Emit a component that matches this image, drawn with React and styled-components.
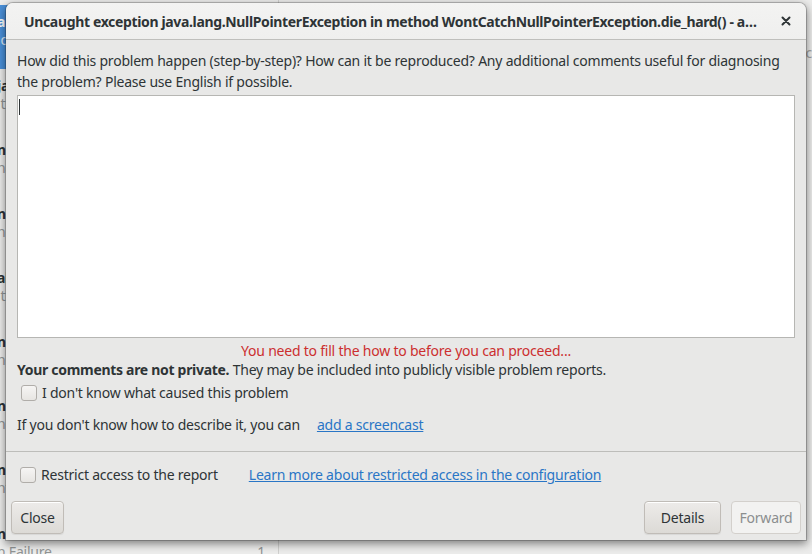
import React from "react";
import styled, { createGlobalStyle } from "styled-components";

const Global = createGlobalStyle`
  html, body { margin: 0; padding: 0; }
  body {
    width: 812px; height: 554px; overflow: hidden;
    background: #ececeb;
    font-family: "Noto Sans", "Open Sans", sans-serif;
    font-size: 14px;
    letter-spacing: -0.22px;
    color: #2e3436;
  }
`;

const Desktop = styled.div`
  position: relative;
  width: 812px;
  height: 554px;
  overflow: hidden;
  display: flex;
  align-items: flex-start;
`;

const Sidebar = styled.div`
  width: 279px;
  height: 554px;
  box-sizing: border-box;
  flex: none;
  border-right: 1px solid #d0d0ce;
  padding-top: 5px;
  display: flex;
  flex-direction: column;
  background: #ededec;
`;

const Row = styled.div`
  flex: none;
  height: 64px;
  box-sizing: border-box;
  padding: 8px 13px 0 0;
  margin-left: -3px;
  background: ${(p) => (p.$selected ? "#4a90d9" : "transparent")};
  color: ${(p) => (p.$selected ? "#ffffff" : "#2e3436")};
  display: flex;
  flex-direction: column;
  line-height: 18px;
`;

const RowTitle = styled.div`
  font-weight: bold;
  white-space: nowrap;
`;

const RowSub = styled.div`
  display: flex;
  justify-content: space-between;
  color: ${(p) => (p.$selected ? "#dbe8f7" : "#929595")};
  white-space: nowrap;
`;

const MainArea = styled.div`
  flex: 1;
  height: 554px;
  box-sizing: border-box;
  background: #ececeb;
  display: flex;
  justify-content: flex-end;
  padding-top: 43px;
  line-height: 20px;
  color: #a0a2a2;
`;

const Dialog = styled.div`
  position: absolute;
  left: 6px;
  top: 3px;
  width: 800px;
  height: 537px;
  background: #e8e8e7;
  border-radius: 7px 7px 0 0;
  box-shadow: 0 3px 9px 1px rgba(0, 0, 0, 0.45), 0 0 0 1px rgba(0, 0, 0, 0.2);
  display: flex;
  flex-direction: column;
  overflow: hidden;
`;

const HeaderBar = styled.div`
  height: 37px;
  flex: none;
  box-sizing: border-box;
  border-bottom: 1px solid #bfbfbc;
  background: linear-gradient(#f3f3f2, #efefee);
  display: flex;
  align-items: center;
  padding: 0 15px 0 18px;
  gap: 24px;
`;

const Title = styled.div`
  flex: 1;
  font-weight: bold;
  letter-spacing: -0.35px;
  white-space: nowrap;
  overflow: hidden;
  text-overflow: ellipsis;
  min-width: 0;
`;

const CloseX = styled.div`
  width: 10px;
  flex: none;
  display: flex;
  justify-content: center;
  align-items: center;
`;

const Body = styled.div`
  flex: 1;
  padding: 10px 11px 0;
  display: flex;
  flex-direction: column;
  line-height: 21px;
`;

const TextArea = styled.div`
  margin-top: 3px;
  height: 243px;
  box-sizing: border-box;
  background: #ffffff;
  border: 1px solid #b6b6b3;
  padding: 3px 1px;
`;

const Caret = styled.div`
  width: 1px;
  height: 16px;
  background: #2e3436;
`;

const ErrorText = styled.div`
  margin-top: 3px;
  text-align: center;
  color: #cc2f2f;
  line-height: 20px;
`;

const Note = styled.div`
  line-height: 18px;
  b { font-weight: bold; letter-spacing: -0.3px; }
`;

const CheckRow = styled.label`
  display: flex;
  align-items: center;
  gap: 5px;
  margin-top: ${(p) => p.$top || 0}px;
  padding-left: ${(p) => p.$indent || 0}px;
  line-height: 20px;
  white-space: nowrap;
`;

const Box = styled.span`
  width: 14px;
  height: 14px;
  border: 1px solid #b0ada9;
  border-radius: 3px;
  background: linear-gradient(#f6f5f4, #e7e5e2);
  flex: none;
`;

const HintRow = styled.div`
  margin-top: 11px;
  display: flex;
  gap: 17px;
  white-space: nowrap;
`;

const Link = styled.a`
  color: #2a76c6;
  text-decoration: underline;
  cursor: pointer;
`;

const Separator = styled.div`
  margin-top: 11px;
  border-top: 1px solid #bdbdba;
`;

const Footer = styled.div`
  padding: 13px 5px 6px;
  display: flex;
  flex-direction: column;
  gap: 16px;
`;

const RestrictRow = styled.div`
  display: flex;
  align-items: center;
  padding-left: 9px;
  gap: 31px;
  white-space: nowrap;
  line-height: 20px;
`;

const Actions = styled.div`
  display: flex;
  align-items: center;
  gap: 10px;
`;

const Spacer = styled.div`
  flex: 1;
`;

const Button = styled.button`
  height: 33px;
  width: ${(p) => p.$w}px;
  box-sizing: border-box;
  padding: 0;
  font-family: inherit;
  font-size: 14px;
  letter-spacing: -0.22px;
  border-radius: 4px;
  border: 1px solid ${(p) => (p.disabled ? "#d3d0cc" : "#c0bcb7")};
  color: ${(p) => (p.disabled ? "#8b8e8f" : "#2e3436")};
  background: ${(p) =>
    p.disabled ? "#f2f2f1" : "linear-gradient(#edebe9, #dcdad6)"};
  box-shadow: ${(p) => (p.disabled ? "none" : "inset 0 1px #ffffff, 0 1px 1px rgba(0,0,0,0.07)")};
`;

const rows = [
  { t: "abrt-applet", s: "idle", n: "", sel: true },
  { t: "java", s: "it", n: "" },
  { t: "nautilus", s: "nautilus crash", n: "" },
  { t: "nm-applet", s: "nm-applet crash", n: "" },
  { t: "abrt", s: "it", n: "" },
  { t: "nmcli", s: "nmcli crash", n: "" },
  { t: "nm-dispatcher", s: "nm crash", n: "" },
  { t: "nfs", s: "nfs crash", n: "" },
  { t: "nscd", s: "n Failure", n: "1" },
];

export default function App() {
  return (
    <>
      <Global />
      <Desktop>
        <Sidebar>
          {rows.map((r, i) => (
            <Row key={i} $selected={r.sel}>
              <RowTitle>{r.t}</RowTitle>
              <RowSub $selected={r.sel}>
                <span>{r.s}</span>
                <span>{r.n}</span>
              </RowSub>
            </Row>
          ))}
        </Sidebar>
        <MainArea>c</MainArea>
        <Dialog>
          <HeaderBar>
            <Title>
              Uncaught exception java.lang.NullPointerException in method
              WontCatchNullPointerException.die_hard() - abrt-java-connector
            </Title>
            <CloseX>
              <svg width="10" height="10" viewBox="0 0 10 10">
                <path d="M1.5 1.5 L8.5 8.5 M8.5 1.5 L1.5 8.5" stroke="#2e3436" strokeWidth="2" strokeLinecap="round" />
              </svg>
            </CloseX>
          </HeaderBar>
          <Body>
            <div>
              How did this problem happen (step-by-step)? How can it be reproduced? Any additional comments useful for diagnosing the problem? Please use English if possible.
            </div>
            <TextArea>
              <Caret />
            </TextArea>
            <ErrorText>You need to fill the how to before you can proceed...</ErrorText>
            <Note>
              <b>Your comments are not private.</b> They may be included into publicly visible problem reports.
            </Note>
            <CheckRow $indent={4} $top={4}>
              <Box />
              I don't know what caused this problem
            </CheckRow>
            <HintRow>
              <span>If you don't know how to describe it, you can</span>
              <Link>add a screencast</Link>
            </HintRow>
          </Body>
          <Separator />
          <Footer>
            <RestrictRow>
              <CheckRow>
                <Box />
                Restrict access to the report
              </CheckRow>
              <Link>Learn more about restricted access in the configuration</Link>
            </RestrictRow>
            <Actions>
              <Button $w={53}>Close</Button>
              <Spacer />
              <Button $w={77}>Details</Button>
              <Button $w={70} disabled>Forward</Button>
            </Actions>
          </Footer>
        </Dialog>
      </Desktop>
    </>
  );
}
